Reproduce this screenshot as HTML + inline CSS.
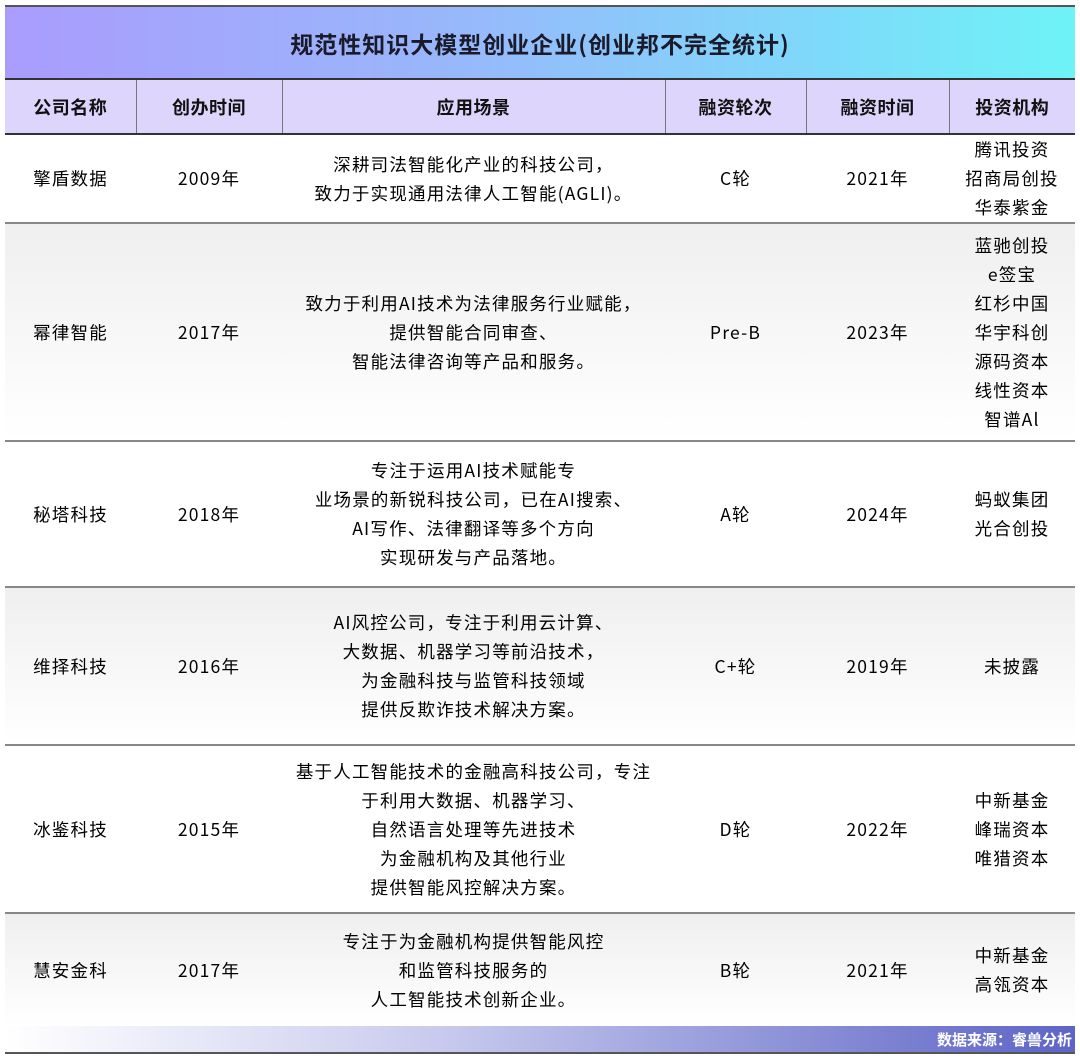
<!DOCTYPE html>
<html><head><meta charset="utf-8"><style>
*{margin:0;padding:0;box-sizing:border-box}
body{width:1080px;height:1062px;background:#fff;font-family:"Noto Sans CJK SC","Liberation Sans",sans-serif;color:#111;position:relative;overflow:hidden}
.title{position:absolute;left:5px;top:5px;width:1070px;height:75px;background:linear-gradient(90deg,#aa9cfd,#99b6fb 40%,#7fd8fa 75%,#6ef3f7);border-top:2px solid #555;border-bottom:2px solid #333;display:flex;align-items:center;justify-content:center;font-size:23px;letter-spacing:1px;font-weight:bold;color:#1a1a2a}
table{position:absolute;left:5px;top:80px;width:1070px;border-collapse:collapse;table-layout:fixed}
th{height:54px;background:#ddd5fb;font-size:18px;font-weight:bold;letter-spacing:0.5px;border-left:1px solid #777;border-right:1px solid #777;border-bottom:2px solid #333}
th:first-child{border-left:none}th:last-child{border-right:none}
td{text-align:center;font-size:17.5px;letter-spacing:1.2px;line-height:29px;border-bottom:2px solid #888;padding:0;color:#000}
tr.g td{background:linear-gradient(#efefef,#fff)}
.foot{position:absolute;left:5px;top:1026px;width:1070px;height:28px;background:linear-gradient(90deg,#fff,#c9cbee 40%,#8a8fd6 75%,#5d64c6);border-bottom:2px solid #555;color:#fff;font-size:15px;font-weight:bold;text-align:right;padding-right:3px;line-height:28px}
</style></head><body>
<div class="title">规范性知识大模型创业企业(创业邦不完全统计)</div>
<table>
<colgroup><col style="width:131px"><col style="width:146px"><col style="width:383px"><col style="width:141px"><col style="width:143px"><col style="width:126px"></colgroup>
<tr><th>公司名称</th><th>创办时间</th><th>应用场景</th><th>融资轮次</th><th>融资时间</th><th>投资机构</th></tr>
<tr style="height:86px"><td>擎盾数据</td><td>2009年</td><td>深耕司法智能化产业的科技公司，<br>致力于实现通用法律人工智能(AGLI)。</td><td>C轮</td><td>2021年</td><td>腾讯投资<br>招商局创投<br>华泰紫金</td></tr>
<tr class="g" style="height:218px"><td>幂律智能</td><td>2017年</td><td>致力于利用AI技术为法律服务行业赋能，<br>提供智能合同审查、<br>智能法律咨询等产品和服务。</td><td>Pre-B</td><td>2023年</td><td>蓝驰创投<br>e签宝<br>红杉中国<br>华宇科创<br>源码资本<br>线性资本<br>智谱Al</td></tr>
<tr style="height:146px"><td>秘塔科技</td><td>2018年</td><td>专注于运用AI技术赋能专<br>业场景的新锐科技公司，已在AI搜索、<br>AI写作、法律翻译等多个方向<br>实现研发与产品落地。</td><td>A轮</td><td>2024年</td><td>蚂蚁集团<br>光合创投</td></tr>
<tr class="g" style="height:158px"><td>维择科技</td><td>2016年</td><td>AI风控公司，专注于利用云计算、<br>大数据、机器学习等前沿技术，<br>为金融科技与监管科技领域<br>提供反欺诈技术解决方案。</td><td>C+轮</td><td>2019年</td><td>未披露</td></tr>
<tr style="height:168px"><td>冰鉴科技</td><td>2015年</td><td>基于人工智能技术的金融高科技公司，专注<br>于利用大数据、机器学习、<br>自然语言处理等先进技术<br>为金融机构及其他行业<br>提供智能风控解决方案。</td><td>D轮</td><td>2022年</td><td>中新基金<br>峰瑞资本<br>唯猎资本</td></tr>
<tr class="g" style="height:114px"><td>慧安金科</td><td>2017年</td><td>专注于为金融机构提供智能风控<br>和监管科技服务的<br>人工智能技术创新企业。</td><td>B轮</td><td>2021年</td><td>中新基金<br>高瓴资本</td></tr>
</table>
<div class="foot">数据来源：睿兽分析</div>
</body></html>
